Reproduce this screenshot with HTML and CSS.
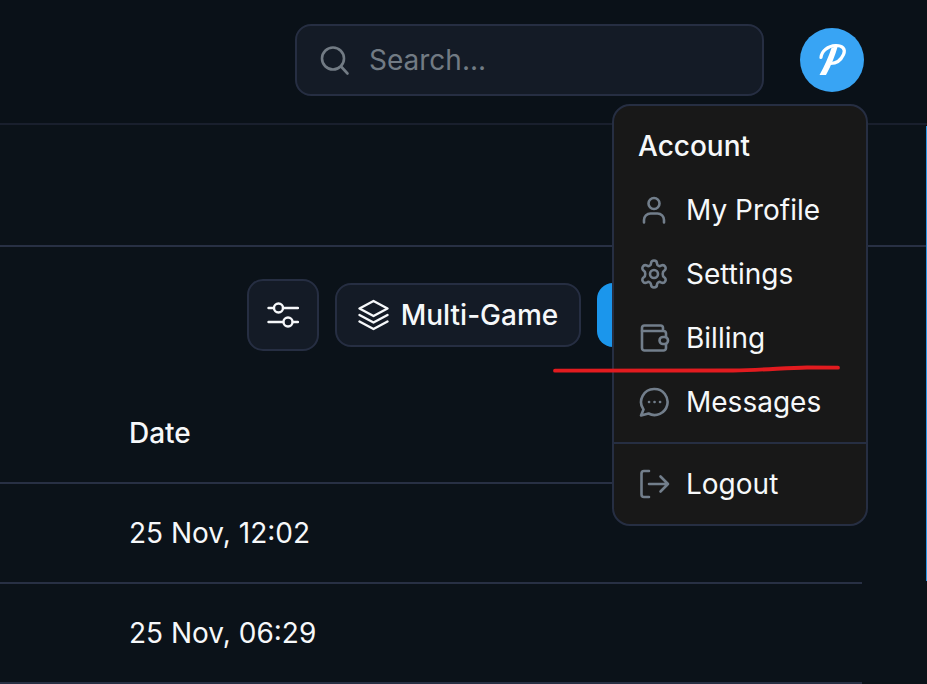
FILE: index.html
```html
<!DOCTYPE html>
<html lang="en">
<head>
<meta charset="utf-8">
<title>Account menu</title>
<link rel="stylesheet" href="styles.css">
</head>
<body>
<div class="page">
  <header class="topbar">
    <label class="search">
      <svg class="search-icon" viewBox="0 0 32 32" fill="none" stroke="currentColor" stroke-width="2.600" stroke-linecap="round" stroke-linejoin="round"><circle cx="15" cy="14.500" r="11"/><path d="M23.500 23l6 6.500"/></svg>
      <span class="placeholder">Search...</span>
    </label>
    <div class="avatar">
      <svg viewBox="0 0 64 64" width="64" height="64"><path d="M21 29.500C21.500 23 28 17.800 35.500 17.500C42.500 17.200 46 21 43.500 26.500C41 32 36 35.500 30.500 35.500" fill="none" stroke="#fff" stroke-width="3.200" stroke-linecap="round"/><path d="M31.500 20L38 17.500C35 28 31 38 26 47H19.500C24.500 38 28.500 29 31.500 20Z" fill="#fff"/></svg>
    </div>
  </header>
  <section class="band"></section>
  <section class="toolbar">
    <button class="filter-btn" type="button">
      <svg viewBox="0 0 32 32" width="32" height="32" fill="none" stroke="currentColor" stroke-width="2.400" stroke-linecap="round"><path d="M1.500 9h5M16 9h15M1.500 23h14.500M26 23h5"/><circle cx="11.500" cy="9" r="4.500"/><circle cx="21" cy="23" r="4.500"/></svg>
    </button>
    <button class="pill-btn" type="button">
      <svg viewBox="0 0 32 32" width="32" height="32" fill="none" stroke="currentColor" stroke-width="2.400" stroke-linecap="round" stroke-linejoin="round"><path d="M15.500 2L29.500 9.500L15.500 17L1.500 9.500Z"/><path d="M1.500 16L15.500 23.500L29.500 16"/><path d="M1.500 22.500L15.500 30L29.500 22.500"/></svg>
      <span>Multi-Game</span>
    </button>
    <button class="primary-btn" type="button"></button>
  </section>
  <div class="table">
    <div class="row head">Date</div>
    <div class="row">25 Nov, 12:02</div>
    <div class="row">25 Nov, 06:29</div>
  </div>
  <div class="edge"></div>

  <nav class="menu">
    <div class="menu-title">Account</div>
    <a class="menu-item">
      <svg class="mi" viewBox="0 0 32 32" fill="none" stroke="currentColor" stroke-width="2.600" stroke-linecap="round" stroke-linejoin="round"><circle cx="16" cy="9.500" r="5.500"/><path d="M6 28.500v-2.500a6.500 6.500 0 0 1 6.500-6.500h7a6.500 6.500 0 0 1 6.500 6.500v2.500"/></svg>
      <span>My Profile</span>
    </a>
    <a class="menu-item">
      <svg class="mi" viewBox="0 0 32 32" fill="none" stroke="currentColor" stroke-width="2.600" stroke-linecap="round" stroke-linejoin="round"><circle cx="16" cy="16" r="4"/><path d="M13 5.500C13 3.500 14.300 2.500 16 2.500s3 1 3 3c0 2 2.200 3.200 3.900 2.200 1.800-1 3.400-.5 4.300 1 .9 1.500.5 3.200-1.200 4.200-1.700 1-1.700 5.200 0 6.200 1.700 1 2.100 2.700 1.200 4.200-.9 1.500-2.500 2-4.300 1-1.700-1-3.900.2-3.900 2.200 0 2-1.300 3-3 3s-3-1-3-3c0-2-2.200-3.200-3.900-2.200-1.800 1-3.400.5-4.300-1-.9-1.500-.5-3.200 1.200-4.200 1.700-1 1.700-5.200 0-6.200-1.700-1-2.100-2.700-1.200-4.200.9-1.500 2.500-2 4.300-1C10.800 8.700 13 7.500 13 5.500Z"/></svg>
      <span>Settings</span>
    </a>
    <a class="menu-item">
      <svg class="mi" viewBox="0 0 32 32" fill="none" stroke="currentColor" stroke-width="2.600" stroke-linecap="round" stroke-linejoin="round"><path d="M4 9V26a2.500 2.500 0 0 0 2.500 2.500h19a2.500 2.500 0 0 0 2.500-2.500V22"/><path d="M28 15V11.500A2.500 2.500 0 0 0 25.500 9H4V6A2.500 2.500 0 0 1 6.500 3.500H22.500A2.500 2.500 0 0 1 25 6V9"/><rect x="21.500" y="15" width="8.500" height="7" rx="3.500"/></svg>
      <span>Billing</span>
    </a>
    <a class="menu-item">
      <svg class="mi" viewBox="0 0 32 32" fill="none" stroke="currentColor" stroke-width="2.600" stroke-linecap="round" stroke-linejoin="round"><path d="M16.500 3A13 13 0 1 1 10.500 27.500L3 29.500L5.500 23.500A13 13 0 0 1 16.500 3Z"/><path d="M11 16h.1M16.500 16h.1M22 16h.1"/></svg>
      <span>Messages</span>
    </a>
    <div class="menu-divider"></div>
    <a class="menu-item">
      <svg class="mi" viewBox="0 0 32 32" fill="none" stroke="currentColor" stroke-width="2.600" stroke-linecap="round" stroke-linejoin="round"><path d="M11 3H6A2.500 2.500 0 0 0 3.500 5.500v21A2.500 2.500 0 0 0 6 29h5"/><path d="M11 16h19M22.500 8.500L30 16l-7.500 7.500"/></svg>
      <span>Logout</span>
    </a>
  </nav>

  <svg class="scribble" viewBox="0 0 927 684" fill="none"><path d="M555 370.700L733 370.500C765 370 785 367.800 807 367.500L838 367.700" stroke="#e21b1f" stroke-width="3.800" stroke-linecap="round"/></svg>
</div>
</body>
</html>
```
FILE: styles.css
```css
* { box-sizing: border-box; }
html, body { margin: 0; padding: 0; background: #0b1219; }
body { font-family: Inter, "Noto Sans", sans-serif; color: #f6f8fa; }
.page { position: relative; width: 927px; height: 684px; overflow: hidden; background: #0b1219; }

.topbar { display: flex; justify-content: flex-end; align-items: flex-start; gap: 36px; height: 125px; padding: 24px 63px 0 0; background: #0a1118; border-bottom: 2px solid #191f2d; }
.search { display: flex; align-items: center; gap: 19px; width: 469px; height: 72px; padding: 0 21px; background: #141b26; border: 2px solid #262e42; border-radius: 16px; }
.search-icon { width: 32px; height: 32px; color: #727b84; flex: none; }
.placeholder { font-size: 28px; line-height: 36px; color: #727b84; }
.avatar { width: 64px; height: 64px; margin-top: 4px; border-radius: 50%; background: #38a4f4; }
.avatar svg { display: block; }

.band { height: 122px; border-bottom: 2px solid #283044; }

.toolbar { display: flex; justify-content: flex-end; align-items: center; gap: 16px; width: 862px; height: 138px; padding: 32px 0 34px; }
.filter-btn, .pill-btn { color: #f6f8fa; background: #141b26; border: 2px solid #262e42; font: inherit; padding: 0; display: flex; align-items: center; justify-content: center; }
.filter-btn { width: 72px; height: 72px; border-radius: 16px; }
.pill-btn { width: 246px; height: 64px; gap: 11px; border-radius: 16px; font-size: 28px; font-weight: 500; }
.primary-btn { width: 265px; height: 64px; background: #1b96ec; border: 0; border-radius: 16px; }

.table { width: 862px; }
.row { display: flex; align-items: center; height: 100px; padding-left: 129px; border-bottom: 2px solid #283044; font-size: 28px; }
.row.head { height: 99px; padding-bottom: 1px; font-weight: 500; }

.edge { position: absolute; top: 126px; right: 0; width: 1px; height: 455px; background: #2a97e3; }

.menu { position: absolute; top: 104px; left: 612px; width: 256px; height: 422px; padding: 8px 0; background: #181818; border: 2px solid #262e42; border-radius: 18px; }
.menu-title, .menu-item { display: flex; align-items: center; height: 64px; padding-left: 24px; font-size: 28px; }
.menu-title { font-weight: 500; }
.menu-item { gap: 16px; }
.mi { width: 32px; height: 32px; color: #727e8b; flex: none; }
.menu-divider { height: 2px; margin: 8px 0; background: #262e42; }

.scribble { position: absolute; inset: 0; width: 927px; height: 684px; pointer-events: none; }
```
